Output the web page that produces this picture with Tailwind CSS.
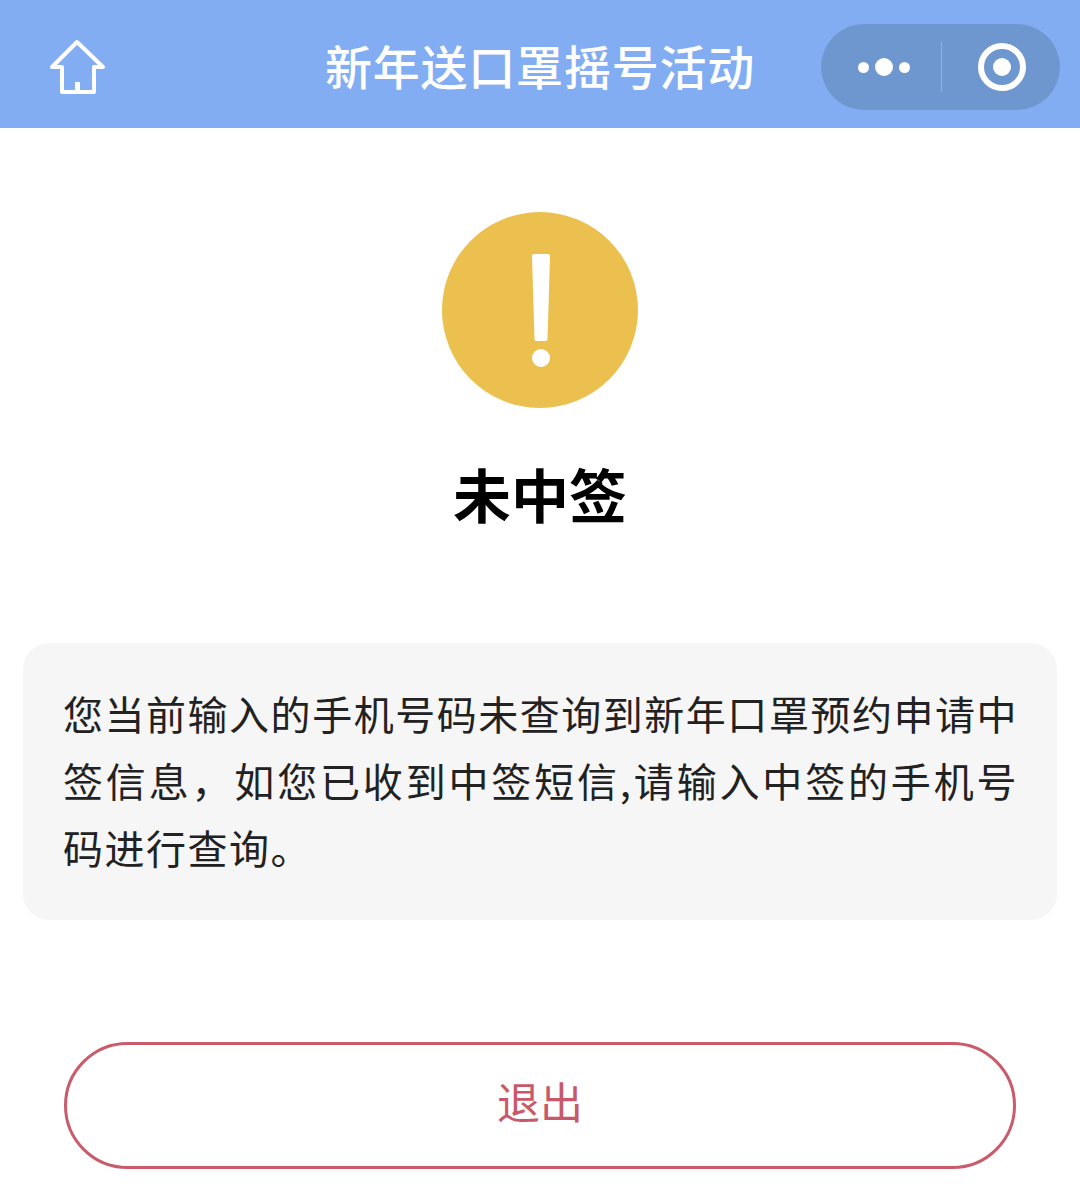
<!DOCTYPE html>
<html lang="zh-CN">
<head>
  <meta charset="UTF-8" />
  <title>新年送口罩摇号活动</title>
  <meta name="viewport" content="width=device-width, initial-scale=1.0" />
  <script src="https://cdn.jsdelivr.net/npm/@tailwindcss/browser@4"></script>
</head>
<body class="bg-white font-['Noto_Sans_CJK_SC',sans-serif] w-[1080px] h-[1196px] overflow-hidden">
  <header class="h-[128px] bg-[#82adf3] flex items-center justify-between pl-[48px] pr-[20px] pt-[6px] relative">
    <svg class="w-[60px] h-[56px]" viewBox="0 0 60 56" fill="none" stroke="#fff" stroke-width="4" stroke-linejoin="round" stroke-linecap="round">
      <path d="M29 3 L4 28 L14 28 L14 53 L46 53 L46 28 L55 28 Z" />
      <rect x="27" y="43" width="5" height="9" fill="#fff" stroke="none" />
    </svg>
    <h1 class="absolute left-0 right-0 top-[37px] text-center text-white text-[47px] leading-[56px] font-medium tracking-[0.8px]">新年送口罩摇号活动</h1>
    <div class="w-[239px] h-[86px] rounded-full bg-[#6f97cf] flex items-center">
      <div class="w-[120px] flex items-center justify-center gap-[6px] pl-[5px]">
        <span class="w-[11px] h-[11px] rounded-full bg-white"></span>
        <span class="w-[18px] h-[18px] rounded-full bg-white"></span>
        <span class="w-[11px] h-[11px] rounded-full bg-white"></span>
      </div>
      <div class="w-[1px] h-[50px] bg-white/25"></div>
      <div class="flex-1 flex items-center justify-center pl-[2px]">
        <div class="w-[48px] h-[48px] rounded-full border-[6px] border-white flex items-center justify-center">
          <span class="w-[18px] h-[18px] rounded-full bg-white"></span>
        </div>
      </div>
    </div>
  </header>

  <main class="flex flex-col items-center">
    <svg class="mt-[84px] w-[196px] h-[196px]" viewBox="0 0 196 196">
      <circle cx="98" cy="98" r="98" fill="#ebc04e" />
      <path d="M90 44 Q90 42 92 42 L106 42 Q108 42 108 44 L105.500 127 Q105.500 129 103.500 129 L94.500 129 Q92.500 129 92.500 127 Z" fill="#fff" />
      <circle cx="99" cy="146" r="9" fill="#fff" />
    </svg>

    <h2 class="mt-[47px] text-[58px] leading-[76px] font-bold text-black">未中签</h2>

    <section class="mt-[112px] w-[1034px] h-[277px] rounded-[26px] bg-[#f6f6f6] pl-[40px] pt-[37px] text-[40px] leading-[67px] tracking-[1.5px] text-[#222]">
      <p class="w-[955px] text-justify">您当前输入的手机号码未查询到新年口罩预约申请中签信息，如您已收到中签短信,请输入中签的手机号码进行查询。</p>
    </section>

    <button class="mt-[122px] w-[952px] h-[127px] pb-[12px] rounded-full border-[3px] border-[#c95b6b] text-[#c9596a] text-[43px] leading-[56px]">退出</button>
  </main>
</body>
</html>
